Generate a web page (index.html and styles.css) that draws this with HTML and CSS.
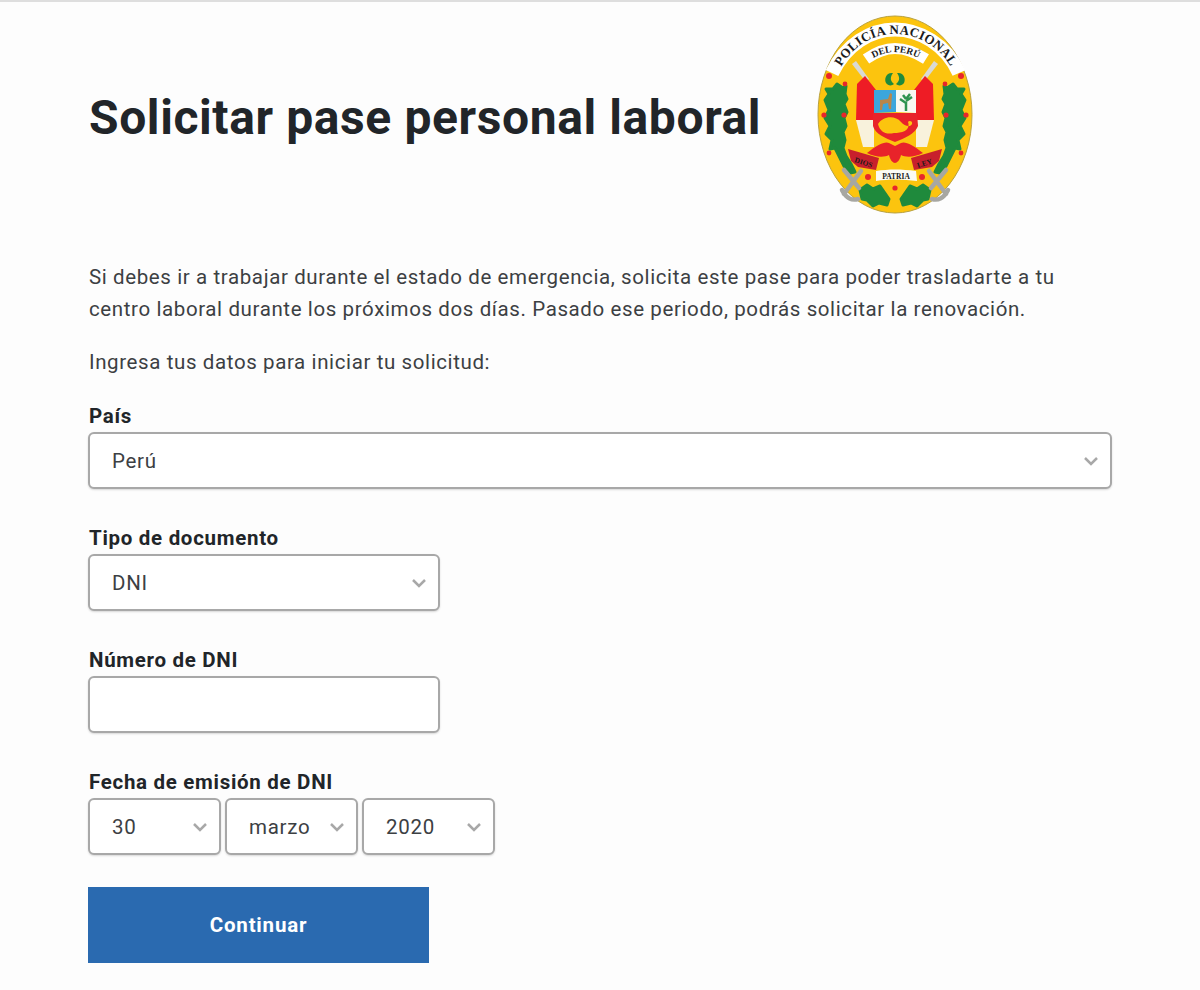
FILE: index.html
```html
<!DOCTYPE html>
<html lang="es">
  <head>
    <meta charset="UTF-8" />
    <meta name="viewport" content="width=device-width, initial-scale=1.0" />
    <link rel="stylesheet" href="styles.css">
    <title>Solicitar pase personal laboral</title>
  </head>
  <body>
    <main class="page">
      <header class="header">
        <h1 class="title">Solicitar pase personal laboral</h1>
        <svg class="emblem" viewBox="814 13 160 204" role="img" aria-label="Escudo de la Policía Nacional del Perú">
          <defs>
            <path id="arcOuter" d="M836 75 C848 48 870 34 894 34 C918 34 942 48 954 75" />
            <path id="arcInner" d="M866 62 C876 55 885 52 894 52 C903 52 913 55 924 62" />
            <g id="side">
              <!-- flag and staff -->
              <path d="M851 64 L855 61 L868 79 L865 82 Z" fill="#d9d9d4" />
              <path d="M856 84 L864 76 L875 90 L873 120 L855 120 Z" fill="#ee1c25" />
              <path d="M855 120 L873 120 L873 147 L862 147 Z" fill="#f8f2dc" />
              <!-- wreath -->
              <path class="leaves" d="M836 84 L842 88 L845 86 L844 94 L846 99 L843 104 L846 112 L843 118 L845 126 L842 132 L844 140 L842 148 L845 156 L850 164 L854 172 L849 173 L843 166 L838 156 L834 148 L829 149 L831 140 L825 134 L829 126 L824 118 L828 110 L824 100 L828 94 L825 89 L832 89 Z" />
              <path class="leaves" d="M859 190 L866 185 L872 189 L879 186 L888 199 L886 205 L878 203 L872 206 L866 200 L861 199 Z" />
              <circle cx="828" cy="76" r="3" fill="#e8262b" />
              <circle cx="844" cy="84" r="2.400" fill="#e8262b" />
              <circle cx="823" cy="115" r="2.600" fill="#e8262b" />
              <circle cx="843" cy="115" r="2.600" fill="#e8262b" />
              <circle cx="828" cy="153" r="2.400" fill="#e8262b" />
              <circle cx="867" cy="177" r="3" fill="#e8262b" />
              <!-- sword -->
              <path d="M843 170 L858 188 M860 171 L843 194 M841 190 C845 198 851 201 857 199" fill="none" stroke="#a7a7a2" stroke-width="4.500" stroke-linecap="round" />
              <!-- ribbon -->
              <path d="M847 149 L878 158 L875 170 L857 167 L850 161 Z" fill="#c8202c" />
            </g>
          </defs>
          <ellipse cx="894" cy="114.500" rx="77" ry="98.500" fill="#fcc40e" stroke="#b9a13c" stroke-width="1" />
          <path d="M831 73 C845 44 870 29.500 894 29.500 C918 29.500 945 44 958 73" fill="none" stroke="#fff" stroke-width="14" />
          <path d="M865 59 C875 52 885 48.500 894 48.500 C903 48.500 914 52 925 59" fill="none" stroke="#fff" stroke-width="11" />
          <use href="#side" />
          <use href="#side" transform="translate(1788 0) scale(-1 1)" />
          <text class="emblem-text emblem-big"><textPath href="#arcOuter" startOffset="50%" text-anchor="middle">POLICÍA NACIONAL</textPath></text>
          <text class="emblem-text emblem-small"><textPath href="#arcInner" startOffset="50%" text-anchor="middle">DEL PERÚ</textPath></text>
          <text class="emblem-text emblem-tiny" x="853" y="162" transform="rotate(18 853 162)">DIOS</text>
          <text class="emblem-text emblem-tiny" x="917" y="168" transform="rotate(-18 917 168)">LEY</text>
          <!-- laurel on top of the shield -->
          <path d="M892 73 C885 72 883 79 885 83 C887 86 891 86 893 84 C889 81 889 77 892 73 Z M896 73 C903 72 905 79 903 83 C901 86 897 86 895 84 C899 81 899 77 896 73 Z" fill="#1f8a3c" />
          <!-- shield -->
          <path d="M873 90 L895 90 L895 112 L873 113 Z" fill="#3ba6dc" />
          <path d="M895 90 L915 90 L915 113 L895 112 Z" fill="#f8f8f2" />
          <path d="M879 110 L879 100 L887 99 L889 93 L891 94 L890 109 L888 109 L887 103 L882 104 L881 110 Z" fill="#b8864a" />
          <path d="M905 111 L905 102 M905 103 L899 99 M905 101 L911 97 M905 99 L902 95 M905 99 L909 94" fill="none" stroke="#2f9350" stroke-width="2.500" />
          <path d="M872 113 L916 113 L917 126 C914 134 904 138 894 142 C884 138 874 134 872 126 Z" fill="#e8232a" />
          <path d="M877 124 C882 116 894 115 900 122 C904 127 910 127 911 124 C912 121 908 120 907 122 C910 131 900 133 893 133 C885 135 879 132 877 124 Z" fill="#fcc40e" />
          <path d="M866 153 C876 145 884 141 888 143 L894 146 L900 143 C904 141 912 145 922 153 C912 158 904 157 900 155 C899 160 896 163 894 163 C892 163 889 160 888 155 C884 157 876 158 866 153 Z" fill="#e8232a" />
          <!-- motto -->
          <path d="M875 171 C888 169 900 169 915 171 L916 181 C902 179 888 179 875 181 Z" fill="#fbfbf6" />
          <text class="emblem-text emblem-tiny" x="895" y="178.500" text-anchor="middle">PATRIA</text>
          <circle cx="894" cy="188" r="2.600" fill="#e8262b" />
        </svg>
      </header>

      <p class="text">Si debes ir a trabajar durante el estado de emergencia, solicita este pase para poder trasladarte a tu centro laboral durante los próximos dos días. Pasado ese periodo, podrás solicitar la renovación.</p>
      <p class="text text-intro">Ingresa tus datos para iniciar tu solicitud:</p>

      <form>
        <div class="field">
          <label class="label" for="pais">País</label>
          <div class="select-box">
            <select id="pais"><option>Perú</option></select>
            <svg class="chevron" viewBox="0 0 16 10"><path d="M2 2 L8 8 L14 2" /></svg>
          </div>
        </div>
        <div class="field field-small">
          <label class="label" for="tipo">Tipo de documento</label>
          <div class="select-box">
            <select id="tipo"><option>DNI</option></select>
            <svg class="chevron" viewBox="0 0 16 10"><path d="M2 2 L8 8 L14 2" /></svg>
          </div>
        </div>
        <div class="field field-small">
          <label class="label" for="numero">Número de DNI</label>
          <input class="input" id="numero" type="text" />
        </div>
        <div class="field">
          <label class="label" for="dia">Fecha de emisión de DNI</label>
          <div class="date-row">
            <div class="select-box">
              <select id="dia"><option>30</option></select>
              <svg class="chevron" viewBox="0 0 16 10"><path d="M2 2 L8 8 L14 2" /></svg>
            </div>
            <div class="select-box">
              <select aria-label="Mes"><option>marzo</option></select>
              <svg class="chevron" viewBox="0 0 16 10"><path d="M2 2 L8 8 L14 2" /></svg>
            </div>
            <div class="select-box">
              <select aria-label="Año"><option>2020</option></select>
              <svg class="chevron" viewBox="0 0 16 10"><path d="M2 2 L8 8 L14 2" /></svg>
            </div>
          </div>
        </div>
        <button class="submit" type="button">Continuar</button>
      </form>
    </main>
  </body>
</html>
```

FILE: styles.css
```css
* {
  margin: 0;
  padding: 0;
  box-sizing: border-box;
}

body {
  min-height: 100vh;
  background-color: #fdfdfd;
  border-top: 2px solid #dedede;
  font-family: Roboto, "Liberation Sans", sans-serif;
  color: #3c4043;
  overflow: hidden;
}

.page {
  width: 1024px;
  margin-left: 88px;
}

.header {
  display: flex;
  align-items: center;
  gap: 54px;
  padding-top: 11px;
  margin-bottom: 44px;
}

.title {
  font-size: 48px;
  font-weight: 700;
  letter-spacing: 0.6px;
  color: #212529;
  padding-left: 1px;
  padding-top: 5px;
}

.emblem {
  width: 160px;
  height: 204px;
  flex: none;
}

.emblem-text {
  font-family: "Liberation Serif", serif;
  font-weight: 700;
  fill: #1b1b1b;
}

.emblem-big {
  font-size: 13px;
  letter-spacing: 0.3px;
}

.emblem-small {
  font-size: 9.500px;
}

.emblem-tiny {
  font-size: 7.500px;
}

.leaves {
  fill: #1f8a3c;
  stroke: #1f8a3c;
  stroke-width: 3;
  stroke-linejoin: round;
}

.text {
  font-size: 20.500px;
  line-height: 32px;
  letter-spacing: 0.61px;
  padding-left: 1px;
}

.text-intro {
  margin-top: 21px;
  margin-bottom: 27px;
}

.field {
  margin-bottom: 38px;
}

.field-small {
  width: 352px;
}

.label {
  display: block;
  font-size: 20.500px;
  line-height: 22px;
  font-weight: 700;
  letter-spacing: 0.7px;
  color: #212529;
  padding-left: 1px;
  margin-bottom: 5px;
}

.select-box {
  position: relative;
}

select,
.input {
  display: block;
  width: 100%;
  height: 57px;
  border: 2px solid #a8a8a8;
  border-radius: 6px;
  background-color: #fff;
  font-family: inherit;
  font-size: 20.500px;
  letter-spacing: 0.7px;
  color: #3c4043;
  padding-left: 22px;
  box-shadow: 0 1px 2px rgba(0, 0, 0, 0.15);
  appearance: none;
}

.chevron {
  position: absolute;
  right: 13px;
  top: 24px;
  width: 16px;
  height: 10px;
  pointer-events: none;
}

.chevron path {
  fill: none;
  stroke: #a8a8a8;
  stroke-width: 2.500;
}

.date-row {
  display: flex;
  gap: 4px;
}

.date-row .select-box {
  width: 133px;
}

.submit {
  display: block;
  width: 341px;
  height: 76px;
  border: none;
  background-color: #2a6ab0;
  color: #fff;
  font-family: inherit;
  font-size: 20.500px;
  font-weight: 700;
  letter-spacing: 0.8px;
  margin-top: -6px;
}
```
